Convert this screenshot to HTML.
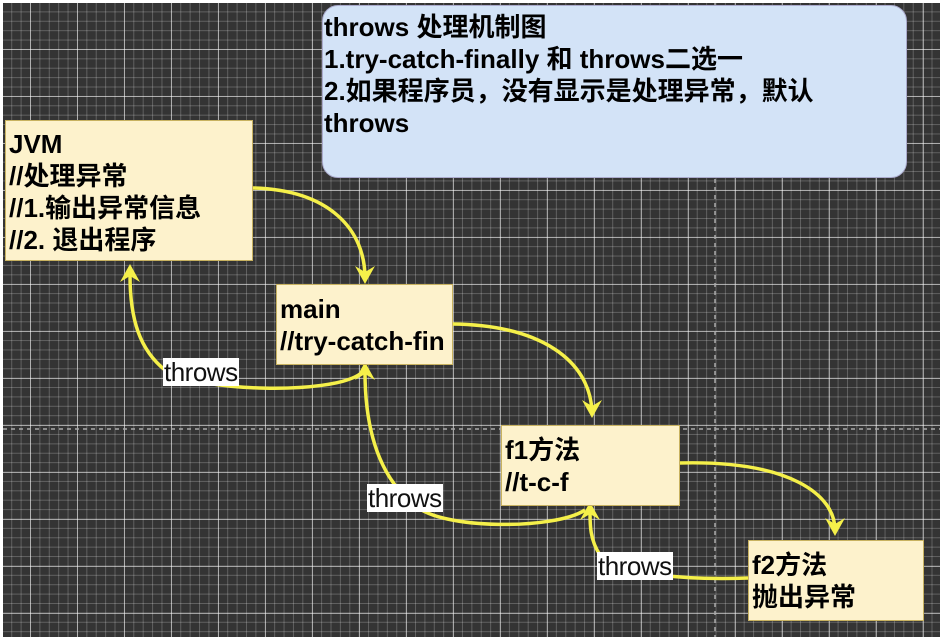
<!DOCTYPE html>
<html><head><meta charset="utf-8"><style>
html,body{margin:0;padding:0;width:946px;height:642px;background:#fff;overflow:hidden}
#bg{position:absolute;left:3px;top:3px;width:937px;height:634px;background-color:#343434;
background-image:
linear-gradient(to right, rgba(255,255,255,0.5) 1px, transparent 1px),
linear-gradient(to bottom, rgba(255,255,255,0.5) 1px, transparent 1px),
linear-gradient(to right, rgba(255,255,255,0.22) 1px, transparent 1px),
linear-gradient(to bottom, rgba(255,255,255,0.22) 1px, transparent 1px);
background-size:47px 47px,47px 47px,9.4px 9.4px,9.4px 9.4px;
background-position:27px 0px,0 -1px,27px 0,0 -1px;}
.box{position:absolute;background:#fdf2cc;border:1px solid #c8b260;box-sizing:border-box;
font-family:"Liberation Sans","Noto Sans CJK SC",sans-serif;font-weight:bold;font-size:26px;line-height:32px;color:#000;padding:4px 0 0 3px;white-space:nowrap;overflow:hidden}
.lbl{position:absolute;background:#fff;font-family:"Liberation Sans",sans-serif;font-size:26px;line-height:28px;color:#111;padding:0 1px;letter-spacing:-0.5px}
svg{position:absolute;left:0;top:0}
</style></head><body>
<div id="bg"></div>
<svg width="946" height="642">
<line x1="3" y1="429" x2="940" y2="429" stroke="#aaa" stroke-dasharray="4 4" stroke-width="1.5"/>
<line x1="715" y1="3" x2="715" y2="637" stroke="#aaa" stroke-dasharray="4 4" stroke-width="1.5"/>
<g fill="none" stroke="#f5f04a" stroke-width="3.5">
<path d="M253 188 C330 190 365 230 365 278"/>
<path d="M452 324 C540 325 590 360 592 412"/>
<path d="M679 463 C790 460 835 495 835 530"/>
<path d="M360 374 C330 395 200 392 165 370 C140 350 130 320 130 275"/>
<path d="M585 510 C555 530 440 530 415 505 C375 475 365 420 365 372"/>
<path d="M748 578 C690 580 610 575 600 555 C590 540 590 525 590 512"/>
</g>
<g fill="#f5f04a">
<path d="M355 266 L365 284 L375 266 L365 272Z"/>
<path d="M582 400 L592 418 L602 400 L592 406Z"/>
<path d="M825 518 L835 536 L845 518 L835 524Z"/>
<path d="M120 282 L130 264 L140 282 L130 276Z"/>
<path d="M355 380 L365 362 L375 380 L365 374Z"/>
<path d="M580 520 L590 502 L600 520 L590 514Z"/>
</g>
</svg>
<div class="box" style="left:322px;top:5px;width:585px;height:173px;background:#d3e3f7;border:1px solid #aac;border-radius:16px;line-height:32px;padding:5px 0 0 1px">throws 处理机制图<br>1.try-catch-finally 和 throws二选一<br>2.如果程序员，没有显示是处理异常，默认<br>throws</div>
<div class="box" style="left:5px;top:120px;width:248px;height:141px;padding-top:7px">JVM<br>//处理异常<br>//1.输出异常信息<br>//2. 退出程序</div>
<div class="box" style="left:276px;top:284px;width:177px;height:81px;padding-top:8px">main<br>//try-catch-fin</div>
<div class="box" style="left:501px;top:425px;width:179px;height:81px;padding-top:8px">f1方法<br>//t-c-f</div>
<div class="box" style="left:748px;top:540px;width:176px;height:81px;padding-top:8px">f2方法<br>抛出异常</div>
<div class="lbl" style="left:163px;top:358px">throws</div>
<div class="lbl" style="left:367px;top:484px">throws</div>
<div class="lbl" style="left:597px;top:552px">throws</div>
</body></html>
